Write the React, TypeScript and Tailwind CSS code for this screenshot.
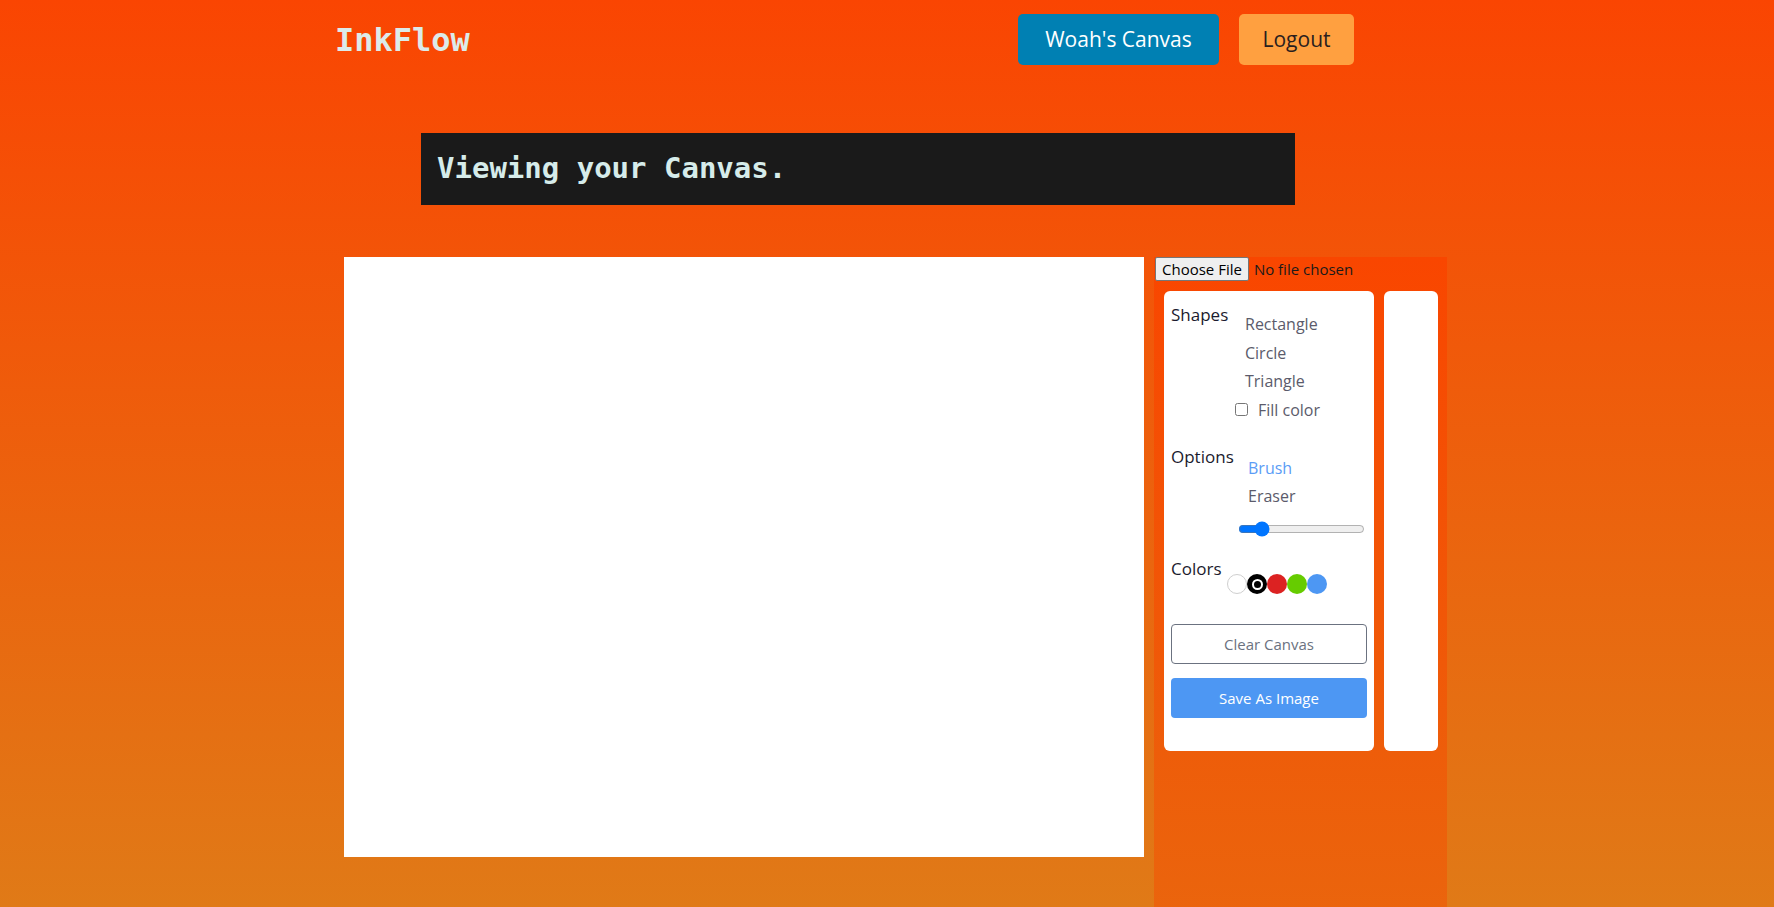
import React from "react";

const sans = { fontFamily: '"Open Sans", "Noto Sans", sans-serif' } as React.CSSProperties;
const mono = { fontFamily: '"DejaVu Sans Mono", "Liberation Mono", monospace' } as React.CSSProperties;

function Swatch({ color, selected, bordered }: { color: string; selected?: boolean; bordered?: boolean }) {
  return (
    <div
      className={`w-[20px] h-[20px] rounded-full flex items-center justify-center ${bordered ? "border border-[#cfcfcf]" : ""}`}
      style={{ backgroundColor: color }}
    >
      {selected && (
        <div className="w-[11px] h-[11px] rounded-full border-[2px] border-white bg-black" />
      )}
    </div>
  );
}

export default function App() {
  return (
    <div
      className="w-full h-[907px] overflow-hidden bg-[linear-gradient(to_bottom,#fa4502,#e07a17)]"
      style={sans}
    >
      {/* Header */}
      <header className="h-[79px] flex items-center pl-[335px]">
        <div className="w-[1019px] flex items-center justify-between">
          <div className="text-[32px] font-bold text-[#dcebea] leading-none" style={mono}>
            InkFlow
          </div>
          <div className="flex items-center gap-[20px]">
            <button className="w-[201px] h-[51px] rounded-[5px] bg-[#0080b3] text-white text-[21px] flex items-center justify-center">
              Woah's Canvas
            </button>
            <button className="w-[115px] h-[51px] rounded-[5px] bg-[#ffa040] text-[#2a1e1e] text-[21px] flex items-center justify-center">
              Logout
            </button>
          </div>
        </div>
      </header>

      {/* Banner */}
      <div className="mt-[54px] ml-[421px] w-[874px] h-[72px] bg-[#1a1a1a] flex items-center pl-[16px]">
        <span className="text-[29px] font-bold text-[#d6ecea]" style={mono}>
          Viewing your Canvas.
        </span>
      </div>

      {/* Main */}
      <div className="mt-[52px] pl-[344px] flex items-start gap-[10px]">
        <div className="w-[800px] h-[600px] bg-white" />

        <div className="w-[293px] h-[1120px] bg-[linear-gradient(to_bottom,#f94600,#e07a16)] flex flex-col">
          <div className="flex items-center h-[24px] pl-[1px]">
            <div className="h-[24px] px-[6px] bg-[#efefef] border border-[#767676] rounded-[2px] flex items-center text-[15px] text-black">
              Choose File
            </div>
            <span className="ml-[5px] text-[15px] text-[#1a1a1a]">No file chosen</span>
          </div>

          <div className="mt-[10px] pl-[10px] flex gap-[10px]">
            {/* Tools card */}
            <div className="w-[210px] h-[460px] bg-white rounded-[6px] px-[7px] pt-[14px] flex flex-col">
              {/* Shapes */}
              <div className="flex">
                <div className="w-[74px] text-[17px] leading-[20px] text-[#1b1b2e]">Shapes</div>
                <div className="mt-[5px] flex flex-col text-[16px] leading-[28.5px] text-[#5b5b6b]">
                  <span>Rectangle</span>
                  <span>Circle</span>
                  <span>Triangle</span>
                </div>
              </div>
              <div className="flex items-center h-[28.5px] pl-[64px] text-[16px] text-[#5b5b6b]">
                <input type="checkbox" className="w-[13px] h-[13px] m-0" />
                <span className="ml-[10px]">Fill color</span>
              </div>

              {/* Options */}
              <div className="mt-[23px] flex">
                <div className="w-[77px] text-[17px] leading-[20px] text-[#1b1b2e]">Options</div>
                <div className="mt-[7px] flex flex-col text-[16px] leading-[28px]">
                  <span className="text-[#5b9cf6]">Brush</span>
                  <span className="text-[#5b5b6b]">Eraser</span>
                </div>
              </div>
              <div className="mt-[11px] pl-[67px] h-[16px] flex items-center">
                <input type="range" min={1} max={50} defaultValue={8} className="w-[127px] m-0" />
              </div>

              {/* Colors */}
              <div className="mt-[22px] flex">
                <div className="w-[56px] text-[17px] leading-[20px] text-[#1b1b2e]">Colors</div>
                <div className="mt-[15px] flex">
                  <Swatch color="#ffffff" bordered />
                  <Swatch color="#000000" selected />
                  <Swatch color="#dc2222" />
                  <Swatch color="#66cc00" />
                  <Swatch color="#4d97f3" />
                </div>
              </div>

              <button className="mt-[30px] w-[196px] h-[40px] border border-[#6b7280] rounded-[4px] text-[15px] text-[#6b7280] bg-white">
                Clear Canvas
              </button>
              <button className="mt-[14px] w-[196px] h-[40px] rounded-[4px] text-[15px] text-white bg-[#4d97f3]">
                Save As Image
              </button>
            </div>

            {/* Layers card */}
            <div className="w-[54px] h-[460px] bg-white rounded-[6px]" />
          </div>
        </div>
      </div>
    </div>
  );
}
